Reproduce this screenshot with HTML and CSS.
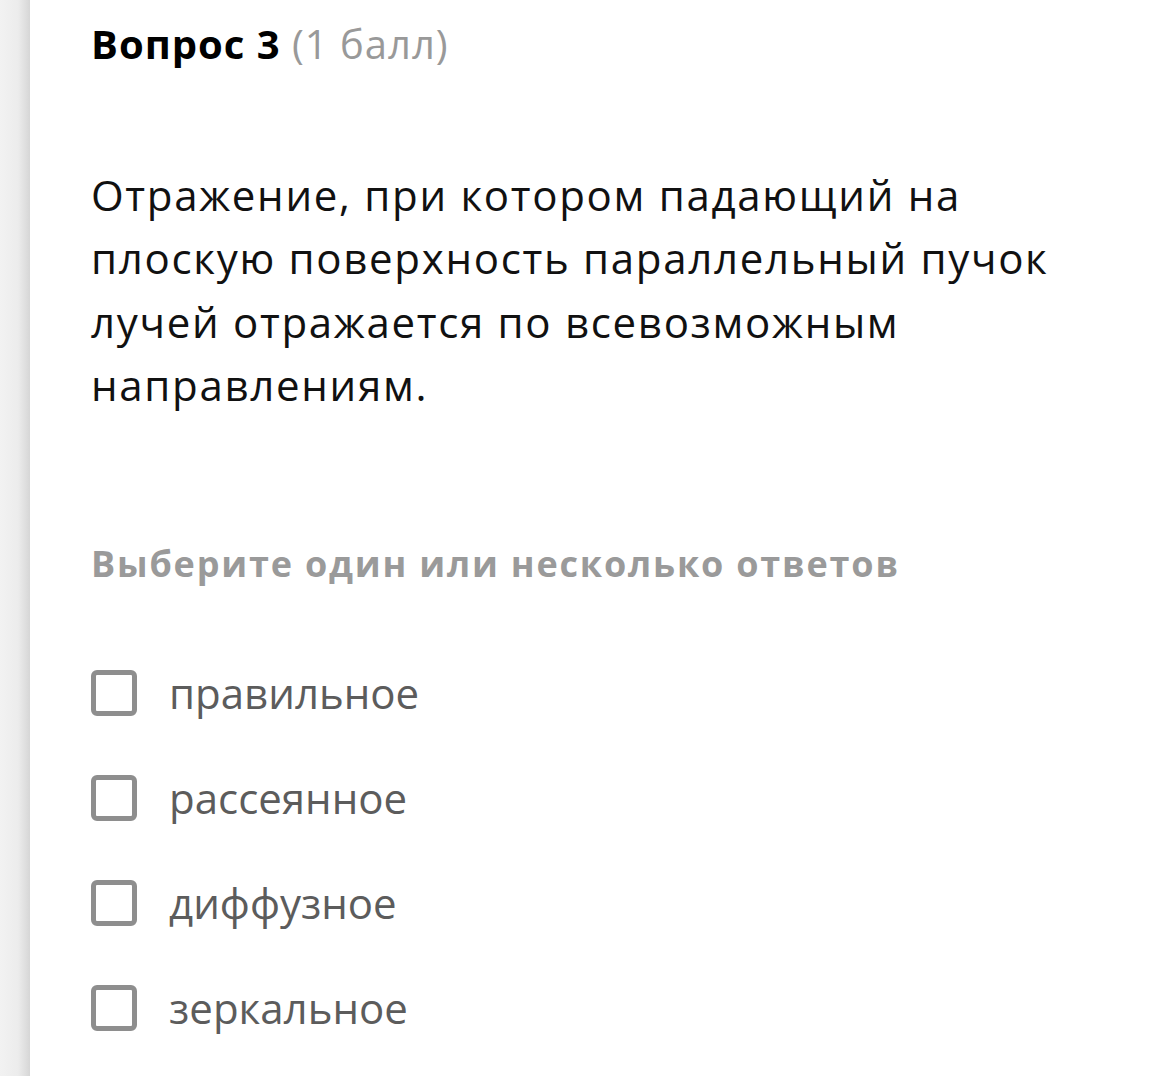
FILE: index.html
```html
<!DOCTYPE html>
<html lang="ru">
<head>
<meta charset="utf-8">
<link rel="stylesheet" href="styles.css">
</head>
<body>
<div class="page">
  <div class="edge"></div>
  <main class="content">
    <h1 class="title"><span class="num">Вопрос 3</span> <span class="pts">(1 балл)</span></h1>
    <p class="question">Отражение, при котором падающий на плоскую поверхность параллельный пучок лучей отражается по всевозможным направлениям.</p>
    <p class="hint">Выберите один или несколько ответов</p>
    <ul class="options">
      <li class="option"><span class="box"></span><span class="label">правильное</span></li>
      <li class="option"><span class="box"></span><span class="label">рассеянное</span></li>
      <li class="option"><span class="box"></span><span class="label">диффузное</span></li>
      <li class="option"><span class="box"></span><span class="label">зеркальное</span></li>
    </ul>
  </main>
</div>
</body>
</html>
```
FILE: styles.css
```css
html, body {
  margin: 0;
  padding: 0;
  background: #fff;
}
body {
  font-family: "Open Sans", sans-serif;
}
.page {
  display: flex;
  min-height: 1076px;
}
.edge {
  width: 30px;
  flex: none;
  background: linear-gradient(to right, #f2f2f2 0%, #ececec 60%, #d6d6d6 100%);
}
.content {
  padding-left: 61px;
  flex: 1;
}
.title {
  margin: 16px 0 0;
  font-size: 40px;
  line-height: 56px;
  font-weight: 400;
  letter-spacing: 1px;
}
.num {
  font-weight: 700;
  color: #000;
}
.pts {
  color: #999;
}
.question {
  margin: 91px 0 0;
  font-size: 42px;
  line-height: 63.3px;
  letter-spacing: 1.7px;
  color: #111;
  max-width: 1000px;
}
.hint {
  margin: 124px 0 0;
  font-size: 36px;
  line-height: 48px;
  font-weight: 700;
  letter-spacing: 1.8px;
  color: #9a9a9a;
}
.options {
  list-style: none;
  margin: 82px 0 0;
  padding: 0;
  display: flex;
  flex-direction: column;
  gap: 59px;
}
.option {
  display: flex;
  align-items: center;
  gap: 32px;
  height: 46px;
}
.box {
  width: 46px;
  height: 46px;
  box-sizing: border-box;
  border: 5px solid #8e8e8e;
  border-radius: 6px;
  flex: none;
}
.label {
  font-size: 42px;
  color: #5c5c5c;
  line-height: 46px;
}
```
